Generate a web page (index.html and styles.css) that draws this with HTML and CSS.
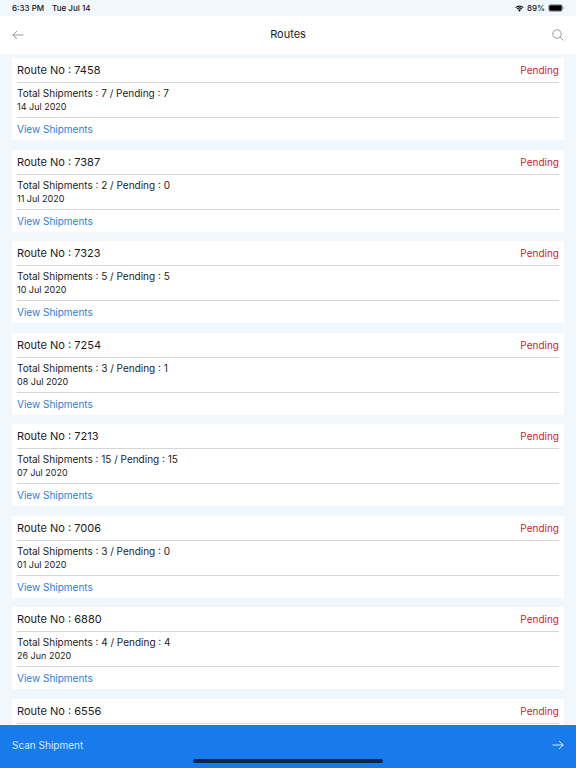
FILE: index.html
```html
<!DOCTYPE html>
<html lang="en">
<head>
    <meta charset="UTF-8">
    <meta name="viewport" content="width=device-width, initial-scale=1.0">
    <title>Routes</title>
    <link rel="stylesheet" href="styles.css">
</head>
<body>
    <div class="status-bar">
        <div class="status-left">
            <span>6:33 PM</span>
            <span>Tue Jul 14</span>
        </div>
        <div class="status-right">
            <svg class="wifi" viewBox="0 0 20 15" aria-hidden="true">
                <path d="M1.5 5.5a12.2 12.2 0 0 1 17 0M4.7 8.8a7.6 7.6 0 0 1 10.6 0" fill="none" stroke="#111" stroke-width="2.6"/>
                <path d="M10 14.5 6.6 11a4.9 4.9 0 0 1 6.8 0z" fill="#111"/>
            </svg>
            <span>89%</span>
            <svg class="battery" viewBox="0 0 34 16" aria-hidden="true">
                <rect x="1" y="1" width="28" height="14" rx="4" fill="none" stroke="#8b9094" stroke-width="1.5"/>
                <rect x="2.500" y="2.500" width="25" height="11" rx="2" fill="#000"/>
                <path d="M31 5.5v5c2-.6 2-4.400 0-5z" fill="#8b9094"/>
            </svg>
        </div>
    </div>
    <header class="header">
        <button class="icon-button" type="button" aria-label="Back">
            <svg class="icon" viewBox="0 0 12 12" aria-hidden="true">
                <path d="M11.500 6H.8M5 2 .8 6 5 10"/>
            </svg>
        </button>
        <h1 class="title">Routes</h1>
        <button class="icon-button" type="button" aria-label="Search">
            <svg class="icon" viewBox="0 0 12 12" aria-hidden="true">
                <circle cx="5" cy="5" r="4.200"/>
                <path d="m8 8 3.500 3.500"/>
            </svg>
        </button>
    </header>
    <main class="routes">
        <article class="card">
            <div class="card-top"><h2>Route No : 7458</h2><span class="state">Pending</span></div>
            <div class="card-info"><p>Total Shipments : 7 / Pending : 7</p><p class="date">14 Jul 2020</p></div>
            <a class="view" href="#">View Shipments</a>
        </article>
        <article class="card">
            <div class="card-top"><h2>Route No : 7387</h2><span class="state">Pending</span></div>
            <div class="card-info"><p>Total Shipments : 2 / Pending : 0</p><p class="date">11 Jul 2020</p></div>
            <a class="view" href="#">View Shipments</a>
        </article>
        <article class="card">
            <div class="card-top"><h2>Route No : 7323</h2><span class="state">Pending</span></div>
            <div class="card-info"><p>Total Shipments : 5 / Pending : 5</p><p class="date">10 Jul 2020</p></div>
            <a class="view" href="#">View Shipments</a>
        </article>
        <article class="card">
            <div class="card-top"><h2>Route No : 7254</h2><span class="state">Pending</span></div>
            <div class="card-info"><p>Total Shipments : 3 / Pending : 1</p><p class="date">08 Jul 2020</p></div>
            <a class="view" href="#">View Shipments</a>
        </article>
        <article class="card">
            <div class="card-top"><h2>Route No : 7213</h2><span class="state">Pending</span></div>
            <div class="card-info"><p>Total Shipments : 15 / Pending : 15</p><p class="date">07 Jul 2020</p></div>
            <a class="view" href="#">View Shipments</a>
        </article>
        <article class="card">
            <div class="card-top"><h2>Route No : 7006</h2><span class="state">Pending</span></div>
            <div class="card-info"><p>Total Shipments : 3 / Pending : 0</p><p class="date">01 Jul 2020</p></div>
            <a class="view" href="#">View Shipments</a>
        </article>
        <article class="card">
            <div class="card-top"><h2>Route No : 6880</h2><span class="state">Pending</span></div>
            <div class="card-info"><p>Total Shipments : 4 / Pending : 4</p><p class="date">26 Jun 2020</p></div>
            <a class="view" href="#">View Shipments</a>
        </article>
        <article class="card card-last">
            <div class="card-top"><h2>Route No : 6556</h2><span class="state">Pending</span></div>
        </article>
    </main>
    <footer class="footer">
        <button class="scan" type="button">
            <span>Scan Shipment</span>
            <svg class="icon" viewBox="0 0 12 12" aria-hidden="true">
                <path d="M.5 6h10.700M7 2l4.200 4L7 10"/>
            </svg>
        </button>
        <div class="home-bar"></div>
    </footer>
</body>
</html>
```
FILE: styles.css
```css
* {
    box-sizing: border-box;
}
body {
    display: flex;
    flex-direction: column;
    min-height: 100vh;
    margin: 0;
    background-color: #f0f8fe;
    font-family: Inter, "Liberation Sans", sans-serif;
    font-size: 10px;
    color: #1c1c1c;
}
h1, h2, p {
    margin: 0;
    font-weight: 400;
}
button {
    border: none;
    background: none;
    font-family: inherit;
    cursor: pointer;
}
.status-bar {
    display: flex;
    justify-content: space-between;
    align-items: center;
    padding: 0 11px 0 12px;
    font-size: 8px;
    font-weight: 500;
    line-height: 16px;
    color: #111;
}
.status-left {
    display: flex;
    gap: 8px;
}
.status-right {
    display: flex;
    align-items: center;
    gap: 3px;
}
.wifi {
    width: 9px;
    height: 7px;
}
.battery {
    width: 17px;
    height: 8px;
}
.header {
    display: flex;
    justify-content: space-between;
    align-items: center;
    padding: 0 12px;
    background-color: #fff;
    border-bottom: 1px solid #f8fafb;
}
.title {
    padding-bottom: 2px;
    font-size: 11px;
    line-height: 36px;
}
.icon-button {
    display: flex;
    padding: 0;
    color: #999;
}
.icon {
    width: 12px;
    height: 12px;
    fill: none;
    stroke: currentColor;
    stroke-width: 1;
}
.routes {
    flex: 1;
    display: flex;
    flex-direction: column;
    justify-content: space-between;
    gap: 8px;
    padding: 3px 12px 0;
}
.card {
    padding: 0 5px;
    background-color: #fff;
}
.card-last {
    padding-bottom: 1px;
}
.card-top {
    display: flex;
    justify-content: space-between;
    align-items: center;
    height: 25px;
    border-bottom: 1px solid #d6d6d6;
}
.card-top h2 {
    font-size: 11px;
}
.state {
    color: #cf2228;
}
.card-info {
    padding: 4px 0;
    border-bottom: 1px solid #d6d6d6;
    line-height: 13px;
}
.date {
    font-size: 9px;
}
.view {
    display: block;
    line-height: 22px;
    color: #2a80d8;
    text-decoration: none;
}
.footer {
    display: flex;
    flex-direction: column;
    align-items: center;
    padding-bottom: 5px;
    background-color: #187bec;
}
.scan {
    display: flex;
    justify-content: space-between;
    align-items: center;
    width: 100%;
    height: 34px;
    padding: 6px 12px 0;
    font-size: 10px;
    color: #d8edff;
}
.home-bar {
    width: 33%;
    height: 4px;
    border-radius: 2px;
    background-color: #10263f;
}
```
